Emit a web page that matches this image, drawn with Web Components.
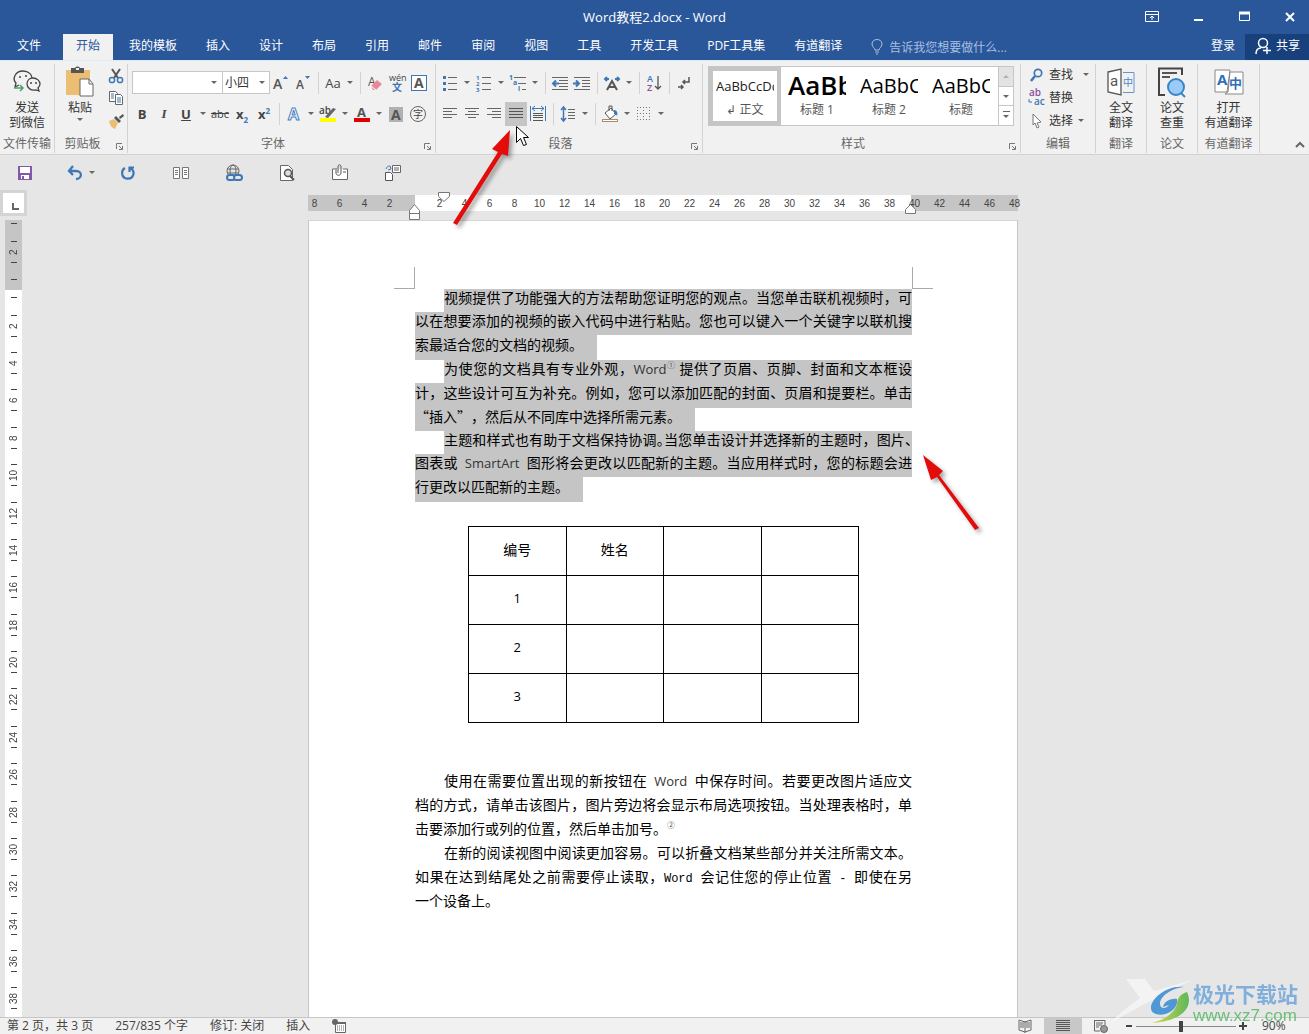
<!DOCTYPE html>
<html lang="zh-CN">
<head>
<meta charset="utf-8">
<title>Word教程2.docx - Word</title>
<style>
  html, body { margin: 0; height: 100%; }
  body { font: 12px/16px "Open Sans", "Noto Sans CJK SC", sans-serif; color: #444; overflow: hidden; }
</style>
</head>
<body>
<word-app></word-app>

<script>
const ARROW = '<path d="M2 3h6l-3 3z" fill="#666"/>';
const ICONS = {
  wechat: [28, 28, '<g fill="none" stroke="#444" stroke-width="1.3"><path d="M6 17l-4 2 1-4C-1 11 2 3 10 3c6 0 9 4 9 7"/><path d="M14 16c0-4 3-6 6-6 4 0 7 3 7 6 0 2-1 3-2 4l1 3-3-1c-5 1-9-2-9-6z"/></g><g fill="#444"><circle cx="7" cy="9" r="1"/><circle cx="13" cy="8" r="1"/><circle cx="18" cy="15" r="1"/><circle cx="23" cy="15" r="1"/></g><path d="M1 20h9m-3-3l3 3-3 3" stroke="#4aa564" stroke-width="1.5" fill="none"/>'],
  paste: [30, 30, '<path d="M1 3h24v25H1z" fill="#ebbe73"/><path d="M6 1h4c1-2 4-2 5 0h4v5H6z" fill="#555"/><rect x="11" y="1" width="3" height="2" fill="#eee"/><path d="M15 12h9l4 5v12H15z" fill="#fff" stroke="#666"/><path d="M24 12v5h4" fill="none" stroke="#666"/>'],
  cut: [16, 16, '<path d="M4 1l6 9M12 1L6 10" stroke="#555" stroke-width="2" fill="none"/><g fill="none" stroke="#3f77b5" stroke-width="1.5"><circle cx="4" cy="12" r="2.6"/><circle cx="12" cy="12" r="2.6"/></g>'],
  copy: [16, 16, '<g fill="#fff" stroke="#666"><path d="M1.500 1.500h6l2 2v8h-8z"/><path d="M7.500 4.500h5l2 2v8h-7z"/></g><path d="M3 4h3M3 6h3M3 8h3M9 8h4M9 10h4M9 12h4" stroke="#3f77b5"/>'],
  brush: [16, 16, '<path d="M1 8l5-2 4 4-3 6c-3-1-5-3-6-8z" fill="#ebbe73"/><path d="M6 5l5 5 2-2-5-5zM11 4l4-3 1 2-4 3z" fill="#555"/>'],
  launcher: [9, 9, '<path d="M1.500 7V1.500H7M4 4l3 3M7.500 4v3.500H4" stroke="#777" fill="none"/>'],
  grow: [16, 16, '<text x="0" y="14" font-size="14" font-weight="600" fill="#555">A</text><path d="M10 4l2.500-3L15 4z" fill="#3f77b5"/>'],
  shrink: [16, 16, '<text x="1" y="14" font-size="12" font-weight="600" fill="#555">A</text><path d="M10 1h5l-2.500 3z" fill="#3f77b5"/>'],
  eraser: [16, 16, '<text x="1" y="11" font-size="12" fill="#555">A</text><path d="M4 11l6-6 5 4-6 6H6z" fill="#e8899a"/><path d="M4 11l5 4" stroke="#fff"/>'],
  pinyin: [18, 18, '<text x="1" y="7" font-size="9" fill="#444">wén</text><text x="4" y="17" font-size="10" font-weight="700" fill="#3f77b5">文</text>'],
  boxA: [18, 18, '<rect x="1.500" y="1.500" width="15" height="15" fill="#fff" stroke="#3f77b5"/><text x="4" y="14" font-size="14" font-weight="700" fill="#555">A</text>'],
  effect: [18, 18, '<text x="3" y="15" font-size="16" font-weight="700" fill="#fff" stroke="#4a7fc0" stroke-width="1">A</text>'],
  highlight: [18, 18, '<text x="0" y="9" font-size="10" font-weight="600" fill="#444">ab</text><path d="M6 12l8-9 3 1-8 9z" fill="#666"/><rect x="1" y="13" width="16" height="4" fill="#ff0"/>'],
  color: [18, 18, '<text x="4" y="12" font-size="13" font-weight="700" fill="#555">A</text><rect x="1" y="13" width="16" height="4" fill="#e00000"/>'],
  shadeA: [18, 18, '<rect x="2" y="2" width="14" height="15" fill="#b1b1b1"/><text x="4" y="15" font-size="14" font-weight="700" fill="#555">A</text>'],
  circled: [18, 18, '<circle cx="9" cy="9" r="7.500" fill="none" stroke="#666"/><text x="4" y="13" font-size="10" fill="#444">字</text>'],
  bullets: [16, 16, '<g fill="#3f77b5"><rect x="1" y="1" width="3" height="3"/><rect x="1" y="7" width="3" height="3"/><rect x="1" y="13" width="3" height="3"/></g><path d="M6 2.500h9M6 8.500h9M6 14.500h9" stroke="#666"/>'],
  numbers: [16, 16, '<g font-size="6" font-weight="700" fill="#3f77b5"><text x="0" y="5">1</text><text x="0" y="11">2</text><text x="0" y="17">3</text></g><path d="M6 2.500h9M6 8.500h9M6 14.500h9" stroke="#666"/>'],
  multi: [18, 16, '<g font-size="7" font-weight="700" fill="#3f77b5"><text x="0" y="5">1</text><text x="4" y="10">a</text><text x="9" y="16">i</text></g><path d="M5 2.500h12M9 8.500h8M13 14.500h4" stroke="#666"/>'],
  outdent: [18, 16, '<path d="M1 2.500h16M8 5.500h9M8 8.500h9M8 11.500h9M1 14.500h16" stroke="#666"/><path d="M8 8.500H2m3-3l-3 3 3 3" stroke="#3f77b5" stroke-width="2" fill="none"/>'],
  indent: [18, 16, '<path d="M1 2.500h16M9 5.500h8M9 8.500h8M9 11.500h8M1 14.500h16" stroke="#666"/><path d="M0 8.500h6m-3-3l3 3-3 3" stroke="#3f77b5" stroke-width="2" fill="none"/>'],
  asian: [18, 16, '<path d="M4 15l5-9 5 9M6 12h6" stroke="#555" stroke-width="2" fill="none"/><path d="M6 4H2m2-2L2 4l2 2M12 4h4m-2-2l2 2-2 2" stroke="#3f77b5" stroke-width="2" fill="none"/>'],
  sort: [16, 18, '<text x="1" y="8" font-size="9" font-weight="600" fill="#3f77b5">A</text><text x="1" y="17" font-size="9" font-weight="600" fill="#8a4fa0">Z</text><path d="M12 2v13m-3-3l3 3 3-3" stroke="#555" fill="none" stroke-width="1.300"/>'],
  marks: [14, 16, '<path d="M12 2v5H6m2-2L6 7l2 2M1 12h5m-2-2l2 2-2 2" stroke="#555" fill="none" stroke-width="1.500"/>'],
  left: [16, 14, '<path d="M1 1.500h14M1 4.500h9M1 7.500h14M1 10.500h9" stroke="#666"/>'],
  center: [16, 14, '<path d="M1 1.500h14M4 4.500h8M1 7.500h14M4 10.500h8" stroke="#666"/>'],
  right: [16, 14, '<path d="M1 1.500h14M6 4.500h9M1 7.500h14M6 10.500h9" stroke="#666"/>'],
  justify: [16, 14, '<path d="M1 1.500h14M1 4.500h14M1 7.500h14M1 10.500h14" stroke="#555"/>'],
  distribute: [18, 18, '<path d="M1.500 1v15M16.500 1v15" stroke="#3f77b5"/><path d="M3 3.500h12M6 1L3 3.500 6 6M12 1l3 2.500L12 6" stroke="#3f77b5" fill="none"/><path d="M4 8.500h10M4 10.500h10M4 12.500h10M4 15.500h10" stroke="#555"/>'],
  spacing: [16, 18, '<path d="M3.500 2v14M1 5l2.500-3L6 5M1 13l2.500 3L6 13" stroke="#3f77b5" fill="none" stroke-width="1.500"/><path d="M8 4.500h7M8 7.500h7M8 10.500h7M8 13.500h7" stroke="#666"/>'],
  bucket: [18, 18, '<path d="M4 8l6-5 5 6-6 5z" fill="#fff" stroke="#555"/><path d="M8 6V1h3v5" fill="none" stroke="#555"/><path d="M13 5c3 0 4 3 3 6-1-2-2-2-3-2z" fill="#3f77b5"/><rect x="1.500" y="14.500" width="15" height="2" fill="#fff" stroke="#a58f6a"/>'],
  borders: [16, 16, '<g fill="none" stroke="#777" stroke-dasharray="1 2"><path d="M1 1.500h13M1 7.500h13M1.500 1v13M7.500 1v13M13.500 1v13"/><path d="M1 13.500h13"/></g>'],
  find: [14, 14, '<circle cx="8" cy="5" r="3.700" fill="none" stroke="#3f77b5" stroke-width="1.700"/><path d="M5 8l-4 5" stroke="#3f77b5" stroke-width="2.500"/>'],
  replace: [18, 18, '<text x="1" y="7" font-size="10" font-weight="600" fill="#8a4fa0">ab</text><text x="6" y="16" font-size="10" font-weight="600" fill="#3f77b5">ac</text><path d="M1 10v3h3" stroke="#3f77b5" fill="none"/>'],
  select: [12, 16, '<path d="M2 1l8 8-4 1 2 4-2 1-2-5-2 2z" fill="#fff" stroke="#777"/>'],
  translate: [30, 30, '<path d="M2 5l13-3v26L2 25z" fill="#fff" stroke="#555" stroke-width="1.300"/><text x="4" y="19" font-size="15" font-family="Roboto" fill="#555">a</text><path d="M17 5.500h11v20H17" fill="none" stroke="#6a94c8"/><text x="17" y="19" font-size="10" fill="#4a86d0">中</text>'],
  check: [30, 30, '<path d="M8 28H2V1.500h23V8" fill="none" stroke="#444" stroke-width="2"/><path d="M5 6h15M5 10h8" stroke="#555" stroke-width="2"/><circle cx="19" cy="20" r="8" fill="#9ccaf6" stroke="#3586c6" stroke-width="2"/><path d="M24 26l4 4" stroke="#3586c6" stroke-width="2"/>'],
  youdao: [32, 30, '<path d="M2 3h15l-3 22H2z" fill="#fff" stroke="#888"/><path d="M17 5h13v22H12l3-2z" fill="#fff" stroke="#888"/><text x="4" y="18" font-size="15" font-weight="700" fill="#2f70b8">A</text><text x="16" y="21" font-size="13" font-weight="700" fill="#2f70b8">中</text>'],
  save: [16, 16, '<path d="M1 1h14v14H1z" fill="#8458a8"/><path d="M3 2h10v6H3zM4 10h8v4H4z" fill="#fff"/><path d="M5 11h2v3H5z" fill="#8458a8"/>'],
  undo: [16, 16, '<path d="M6 1L2 6l4 4M2 6h7c7 0 6 8 0 8" stroke="#3f77b5" stroke-width="2.300" fill="none"/>'],
  redo: [16, 16, '<path d="M5 3C1 5 1 12 6 13.500 14 15 16 6 10 3M14 2.500H9.500V7" stroke="#3f77b5" stroke-width="2.200" fill="none"/>'],
  pages: [18, 14, '<g fill="#fff" stroke="#777"><path d="M1.500 1.500h6v11h-6zM10.500 1.500h6v11h-6z"/></g><path d="M3 4.500h3M3 6.500h3M3 8.500h3M12 4.500h3M12 6.500h3M12 8.500h3" stroke="#777"/>'],
  link: [18, 18, '<g fill="none" stroke="#666"><circle cx="8" cy="7" r="6"/><ellipse cx="8" cy="7" rx="3" ry="6"/><path d="M2 5h12M2 9h12"/></g><g fill="#e6e6e6" stroke="#3f77b5" stroke-width="2"><rect x="2" y="11" width="8" height="5" rx="2.500"/><rect x="9" y="11" width="8" height="5" rx="2.500"/></g>'],
  preview: [16, 18, '<path d="M1.500 1.500h8l4 4v11h-12z" fill="#fff" stroke="#666"/><circle cx="9" cy="9" r="3.500" fill="#ddd" stroke="#555" stroke-width="1.500"/><path d="M11 12l4 4" stroke="#555" stroke-width="2"/>'],
  attach: [18, 18, '<path d="M4 5H1.500v10.500h15V5H12" fill="#fff" stroke="#666"/><path d="M5 4v5c0 3 5 3 5 0V3c0-3-3-3-3 0v6" fill="none" stroke="#555"/><path d="M12 8h3" stroke="#555"/>'],
  mail: [18, 18, '<path d="M1.500 8.500h5l2 2v6h-7z" fill="#fff" stroke="#555"/><path d="M8.500 1.500h8v7h-8zM10 4h5M10 6h5" fill="#fff" stroke="#666"/><path d="M2 5c1-3 3-3 4-3m-2 4l3-1-1-3" stroke="#3f77b5" fill="none"/>'],
  ribbonOpt: [14, 12, '<path d="M.5.5h13v10H.5zM.5 3.500h13M7 9V5M5 7l2-2 2 2" fill="none" stroke="#fff"/>'],
  min: [10, 12, '<path d="M1 9h9" stroke="#fff" stroke-width="2"/>'],
  max: [11, 12, '<path d="M.5 1.500h10v8H.5z" fill="none" stroke="#fff"/><path d="M0 2h11" stroke="#fff" stroke-width="3"/>'],
  close: [10, 12, '<path d="M1 2l8 8M9 2l-8 8" stroke="#fff" stroke-width="2"/>'],
  bulb: [12, 16, '<path d="M4 11c0-2-3-3-3-6 0-6 10-6 10 0 0 3-3 4-3 6zM4 13h4M5 15h2" stroke="#a9bfe0" fill="none"/>'],
  person: [18, 18, '<circle cx="9" cy="6" r="4.500" fill="none" stroke="#fff" stroke-width="1.500"/><path d="M2 17c0-4 2-6 5-6M13 10v7M9 13.500h8" fill="none" stroke="#fff" stroke-width="1.500"/>'],
  up: [10, 6, '<path d="M1 5l4-4 4 4" fill="none" stroke="#666" stroke-width="2"/>'],
  caret: [10, 9, ARROW],
  minus: [8, 8, '<path d="M1 4h6" stroke="#444" stroke-width="2"/>'],
  plus: [8, 8, '<path d="M0 4h8M4 0v8" stroke="#444" stroke-width="2"/>'],
  macro: [14, 14, '<path d="M3.500 3.500h10v10h-10z" fill="#fff" stroke="#666"/><path d="M3 4h11" stroke="#666" stroke-width="2"/><path d="M5 7h7M5 9h7M5 11h7" stroke="#666" stroke-dasharray="1 1"/><circle cx="3" cy="3" r="3" fill="#666"/>'],
  read: [14, 14, '<path d="M7 2v12M7 3L1 1v10l6 2 6-2V1z" fill="none" stroke="#666"/><path d="M2 4h4M2 6h4M2 8h4M8 4h4M8 6h4M8 8h4" stroke="#666"/>'],
  print: [14, 14, '<path d="M0 1.500h14M0 3.500h14M0 5.500h14M0 7.500h14M0 9.500h14M0 11.500h14" stroke="#555"/>'],
  web: [16, 14, '<path d="M1 1.500h11V6M1.500 1v11H7M3 4h7M3 6h6M3 8h3" fill="none" stroke="#666"/><circle cx="11" cy="10" r="3.500" fill="#999" stroke="#666"/>'],
};

/* Base class: renders the static template of each element into an open root. */
class Part extends HTMLElement {
  connectedCallback() {
    if (this.shadowRoot) return;
    const t = document.createElement('template');
    t.innerHTML = `<style>*{box-sizing:border-box}button,input,select{font:inherit;color:inherit}
      button{border:0;background:none;padding:0;margin:0;display:flex;align-items:center;justify-content:center}
      ${this.constructor.css || ''}</style>${this.render()}`;
    this.attachShadow({ mode: 'open' }).append(t.content.cloneNode(true));
  }
  attr(n, d = '') { return this.getAttribute(n) ?? d; }
}
const define = (name, css, render) => customElements.define(name, class extends Part {
  static css = css;
  render() { return render(this); }
});

define('w-icon', ':host{display:inline-flex;flex:none}svg{display:block;overflow:visible}', el => {
  const [w, h, body] = ICONS[el.attr('name')];
  return `<svg width="${w}" height="${h}" viewBox="0 0 ${w} ${h}" aria-hidden="true">${body}</svg>`;
});

define('tool-button', `
  :host{display:flex;flex:none;height:24px}
  .main{width:22px;height:24px}
  :host([on]) .main{background:#c5c5c5}
  .drop{width:12px;height:24px}`, el =>
  `<button class="main" aria-label="${el.attr('label')}">${el.attr('icon') ? `<w-icon name="${el.attr('icon')}"></w-icon>` : '<slot></slot>'}</button>` +
  (el.hasAttribute('drop') ? `<button class="drop" aria-label="${el.attr('label')}选项"><w-icon name="caret"></w-icon></button>` : ''));

define('tool-sep', ':host{display:block;width:8px;height:22px;flex:none}i{display:block;width:1px;height:100%;margin:0 auto;background:#d2d2d2}', () => '<i></i>');

define('ribbon-group', `
  :host{display:flex;flex-direction:column;flex:none;border-right:1px solid #d2d2d2;margin:3px 0 1px}
  :host([grow]){flex:1;min-width:0}
  .body{flex:1;min-height:0}
  footer{display:flex;align-items:center;justify-content:center;height:18px;line-height:18px;color:#666;position:relative;white-space:nowrap}
  footer button{position:absolute;right:2px;bottom:1px;width:11px;height:11px}
  :host([launch="near"]) footer{padding-right:17px}`, el =>
  `<div class="body"><slot></slot></div><footer><span>${el.attr('name')}</span>${el.hasAttribute('launch') ? `<button aria-label="${el.attr('name')}设置"><w-icon name="launcher"></w-icon></button>` : ''}</footer>`);

define('big-button', `
  :host{display:block}
  button{flex-direction:column;width:100%;line-height:15px;color:#333;white-space:nowrap}
  .pic{display:flex;align-items:center;justify-content:center;height:36px}`, el =>
  `<button><span class="pic"><w-icon name="${el.attr('icon')}"></w-icon></span><slot></slot></button>`);

define('window-bar', `
  :host{display:flex;height:34px;align-items:center;background:#2a579a;color:#fff}
  .side{flex:1;display:flex;justify-content:flex-end;gap:8px}
  .side button{width:38px;height:32px}
  h1{margin:0;font-size:13px;font-weight:400;line-height:18px}`, () => `
  <div class="side"></div><h1>Word教程2.docx - Word</h1>
  <div class="side"><button aria-label="功能区显示选项"><w-icon name="ribbonOpt"></w-icon></button><button aria-label="最小化"><w-icon name="min"></w-icon></button><button aria-label="最大化"><w-icon name="max"></w-icon></button><button aria-label="关闭"><w-icon name="close"></w-icon></button></div>`);

define('tab-strip', `
  :host{display:flex;height:26px;background:#2a579a;color:#fff;padding-left:4px}
  nav{display:flex;gap:3px;white-space:nowrap}
  nav button{padding:0 13px 2px}
  nav .file{margin-right:6px}
  nav .on{background:#f1f1f1;color:#2a579a}
  .tell{display:flex;align-items:center;gap:6px;margin-left:16px;flex:1}
  input{border:0;background:none;width:140px;padding:0;height:20px;color:#a9bfe0;outline:0}
  input::placeholder{color:#a9bfe0;opacity:1}
  .login{padding:0 10px 2px}
  .share{width:64px;background:#17407c;gap:4px;padding-bottom:2px}`, () => `
  <nav>${['文件', '开始', '我的模板', '插入', '设计', '布局', '引用', '邮件', '审阅', '视图', '工具', '开发工具', 'PDF工具集', '有道翻译'].map((t, i) => `<button class="${['file', 'on'][i] || ''}">${t}</button>`).join('')}</nav>
  <label class="tell"><w-icon name="bulb"></w-icon><input aria-label="操作说明搜索" placeholder="告诉我您想要做什么..."></label>
  <button class="login">登录</button><button class="share"><w-icon name="person"></w-icon>共享</button>`);

define('style-card', `
  :host{display:block;width:72px;height:58px;flex:none}
  button{width:100%;height:100%;flex-direction:column;justify-content:flex-start;padding:1px 6px;border:1px solid transparent}
  :host([on]) button{border:4px solid #c5c5c5;padding:0 3px}
  .demo{width:100%;height:33px;line-height:33px;overflow:hidden;white-space:nowrap;color:#000;text-align:left}
  :host([on]) .demo{height:31px;line-height:31px;font-size:13px;color:#222}
  .name{line-height:16px;color:#555}`, el =>
  `<button><span class="demo" style="${el.attr('look')}">${el.attr('demo')}</span><span class="name"><slot></slot></span></button>`);

define('style-gallery', `
  :host{display:flex;height:60px;border:1px solid #c6c6c6;background:#fff;margin:2px 6px 0 5px}
  .cards{display:flex;flex:1;min-width:0;overflow:hidden}
  .scroll{width:15px;border-left:1px solid #c6c6c6;display:flex;flex-direction:column}
  .scroll button{flex:1;width:100%;border-bottom:1px solid #c6c6c6}
  .scroll button:first-child{background:#e3e3e3}
  .scroll button:first-child w-icon{transform:rotate(180deg);opacity:.4}
  .scroll button:last-child{border:0}
  .more{width:7px;border-top:1px solid #666;display:flex;justify-content:center}`, () => `
  <div class="cards">
    <style-card on demo="AaBbCcDd">↲ 正文</style-card>
    <style-card demo="AaBb" look="font-size:26px;font-weight:600">标题 1</style-card>
    <style-card demo="AaBbC" look="font-size:20px">标题 2</style-card>
    <style-card demo="AaBbC" look="font-size:20px">标题</style-card>
  </div>
  <div class="scroll"><button aria-label="上一行"><w-icon name="caret"></w-icon></button><button aria-label="下一行"><w-icon name="caret"></w-icon></button><button aria-label="更多样式"><span class="more"><w-icon name="caret"></w-icon></span></button></div>`);

define('word-ribbon', `
  :host{display:flex;height:95px;background:#f1f1f1;border-top:1px solid #d8ecf8;border-bottom:1px solid #d2d2d2}
  .row{display:flex;align-items:center;height:31px;padding-left:3px}
  .row:first-child{margin-top:3px}
  .clip{display:flex}
  .paste{width:52px}
  .mini{display:flex;flex-direction:column}
  .font{width:91px;height:23px;border:1px solid #c6c6c6;background:#fff;display:flex;align-items:center;margin-left:1px}
  .font input{width:76px;border:0;background:none;height:20px;outline:0}
  .size{width:47px;height:23px;border:1px solid #c6c6c6;border-left:0;background:#fff;display:flex;align-items:center}
  .size select{appearance:none;border:0;background:none;padding:0 0 0 2px;width:34px;height:21px;outline:0;color:#333}
  .edit{margin-top:-1px}
  .edit button{gap:3px;height:23px;color:#333;padding-left:7px}
  .edit .ic{width:18px;display:flex;justify-content:center}
  .edit .d{margin-left:5px}
  .end{width:49px;display:flex;align-items:flex-end;justify-content:flex-end;padding:0 4px 4px 0}
  .end button{height:10px}
  b,i,u,s,span.x{font-size:13px;color:#444}
  s{font-size:11px}
  .x{font-weight:700}
  sub,sup{font-size:8px;color:#3f77b5;line-height:0}`, () => `
  <ribbon-group style="width:55px" name="文件传输"><big-button icon="wechat"><span>发送</span><span>到微信</span></big-button></ribbon-group>
  <ribbon-group style="width:73px" name="剪贴板" launch="near"><div class="clip">
    <div class="paste"><big-button icon="paste"><span>粘贴</span><w-icon name="caret"></w-icon></big-button></div>
    <div class="mini"><tool-button icon="cut" label="剪切" style="height:22px"></tool-button><tool-button icon="copy" label="复制" style="height:23px"></tool-button><tool-button icon="brush" label="格式刷" style="height:22px"></tool-button></div></div></ribbon-group>
  <ribbon-group style="width:308px" name="字体" launch="near">
    <div class="row"><label class="font"><input aria-label="字体"><w-icon name="caret"></w-icon></label>
      <label class="size"><select aria-label="字号"><option>小四</option></select><w-icon name="caret"></w-icon></label>
      <tool-button icon="grow" label="增大字号"></tool-button><tool-button icon="shrink" label="减小字号"></tool-button><tool-sep></tool-sep>
      <tool-button label="更改大小写" drop><span style="font-size:13px">Aa</span></tool-button><tool-sep></tool-sep>
      <tool-button icon="eraser" label="清除格式"></tool-button><tool-button icon="pinyin" label="拼音指南"></tool-button><tool-button icon="boxA" label="字符边框"></tool-button></div>
    <div class="row"><tool-button label="加粗"><b>B</b></tool-button><tool-button label="倾斜"><i style="font-family:'Liberation Serif',serif;font-weight:700">I</i></tool-button><tool-button label="下划线" drop><u style="font-weight:700">U</u></tool-button>
      <tool-button label="删除线"><s>abc</s></tool-button><tool-button label="下标"><span class="x">x<sub>2</sub></span></tool-button><tool-button label="上标"><span class="x">x<sup>2</sup></span></tool-button><tool-sep></tool-sep>
      <tool-button icon="effect" label="文本效果" drop></tool-button><tool-button icon="highlight" label="突出显示" drop></tool-button><tool-button icon="color" label="字体颜色" drop></tool-button><tool-button icon="shadeA" label="字符底纹"></tool-button><tool-button icon="circled" label="带圈字符"></tool-button></div>
  </ribbon-group>
  <ribbon-group style="width:267px" name="段落" launch="near">
    <div class="row"><tool-button icon="bullets" label="项目符号" drop></tool-button><tool-button icon="numbers" label="编号" drop></tool-button><tool-button icon="multi" label="多级列表" drop></tool-button><tool-sep></tool-sep>
      <tool-button icon="outdent" label="减少缩进"></tool-button><tool-button icon="indent" label="增加缩进"></tool-button><tool-sep></tool-sep><tool-button icon="asian" label="中文版式" drop></tool-button><tool-sep></tool-sep><tool-button icon="sort" label="排序"></tool-button><tool-sep></tool-sep><tool-button icon="marks" label="编辑标记"></tool-button></div>
    <div class="row"><tool-button icon="left" label="左对齐"></tool-button><tool-button icon="center" label="居中"></tool-button><tool-button icon="right" label="右对齐"></tool-button><tool-button icon="justify" label="两端对齐" on></tool-button><tool-button icon="distribute" label="分散对齐"></tool-button><tool-sep></tool-sep>
      <tool-button icon="spacing" label="行距" drop></tool-button><tool-sep></tool-sep><tool-button icon="bucket" label="底纹" drop></tool-button><tool-button icon="borders" label="边框" drop></tool-button></div>
  </ribbon-group>
  <ribbon-group grow name="样式" launch="near"><style-gallery></style-gallery></ribbon-group>
  <ribbon-group style="width:75px" name="编辑"><div class="edit">
    <button><span class="ic"><w-icon name="find"></w-icon></span>查找<w-icon class="d" name="caret"></w-icon></button>
    <button><span class="ic"><w-icon name="replace"></w-icon></span>替换</button>
    <button><span class="ic"><w-icon name="select"></w-icon></span>选择<w-icon name="caret"></w-icon></button></div></ribbon-group>
  <ribbon-group style="width:51px" name="翻译"><big-button icon="translate"><span>全文</span><span>翻译</span></big-button></ribbon-group>
  <ribbon-group style="width:51px" name="论文"><big-button icon="check"><span>论文</span><span>查重</span></big-button></ribbon-group>
  <ribbon-group style="width:62px" name="有道翻译"><big-button icon="youdao"><span>打开</span><span>有道翻译</span></big-button></ribbon-group>
  <div class="end"><button aria-label="折叠功能区"><w-icon name="up"></w-icon></button></div>`);

define('quick-access', `
  :host{display:flex;align-items:center;height:35px;padding-left:14px;gap:31px}
  .u{margin:0 -12px 0 -3px}`, () => `
  <tool-button icon="save" label="保存"></tool-button><tool-button class="u" icon="undo" label="撤消" drop></tool-button><tool-button icon="redo" label="重复"></tool-button><tool-button icon="pages" label="多页"></tool-button><tool-button icon="link" label="超链接"></tool-button><tool-button icon="preview" label="打印预览"></tool-button><tool-button icon="attach" label="附件"></tool-button><tool-button icon="mail" label="邮件合并"></tool-button>`);

define('ruler-h', `
  :host{display:block;position:relative;height:16px;margin:5px 0 9px;background:linear-gradient(90deg,#c5c5c5 107px,#fff 107px,#fff 603px,#c5c5c5 603px);font:10px/17px "Liberation Sans",sans-serif;color:#444}
  .n{display:flex;margin:0 -9px 0 -6px}
  .n span{width:25px;text-align:center;flex:none}
  svg{position:absolute;overflow:visible}
  path{fill:#fff;stroke:#777}`, () => {
  let s = '';
  for (let v = -8; v <= 48; v += 2) s += `<span>${v === 0 ? '&nbsp;' : Math.abs(v)}</span>`;
  return `<div class="n">${s}</div>
  <svg width="12" height="16" style="left:101px;top:9px"><path d="M.5 15.500v-9l5-6 5 6v9zM.5 9.500h10"/></svg>
  <svg width="12" height="11" style="left:130px;top:-3px"><path d="M.5.5h11v4l-5.500 5-5.500-5z"/></svg>
  <svg width="12" height="11" style="left:597px;top:8px"><path d="M.5 10.500v-4l5-5 5 5v4z"/></svg>`;
});

define('ruler-v', `
  :host{display:flex;flex-direction:column;width:17px;background:#fff;font:10px/12px "Liberation Sans",sans-serif;color:#444;min-height:0}
  .top{height:70px;background:#c5c5c5;display:flex;flex-direction:column;justify-content:space-between;align-items:center;padding:3px 0 10px}
  .cells{flex:1;display:flex;flex-direction:column;align-items:center;margin-top:17px;min-height:0;position:relative}
  .c{flex:1;min-height:0;display:flex;flex-direction:column;align-items:center;justify-content:center;gap:2px}
  .c span{writing-mode:vertical-rl;transform:rotate(180deg);height:16px;text-align:center}
  i{display:block;width:6px;height:1px;background:#444;flex:none}
  .cells>i{position:absolute;top:-10px}`, () => {
  const cell = n => `<div class="c"><i></i><span>${n}</span><i></i></div>`;
  let s = '<i></i>';
  for (let n = 2; n <= 38; n += 2) s += cell(n);
  return `<div class="top"><i></i>${cell(2)}<i></i></div><div class="cells">${s}</div>`;
});

define('doc-line', `
  :host{display:block;height:23px;line-height:17px;white-space:nowrap;text-align:justify;text-align-last:justify}
  :host([tall]){height:25px;line-height:18px}
  :host([indent]){margin-left:29px}
  :host([sel]){background:#c5c5c5}
  :host([full]){text-spacing-trim:space-all}
  :host([end]){width:fit-content;text-align-last:left;padding-right:14px}`, () => '<slot></slot>');

define('doc-table', `
  :host{display:block;margin:24px 53px 0}
  table{border-collapse:collapse;width:100%;table-layout:fixed}
  td,th{border:1px solid #000;height:49px;padding:0 0 4px;text-align:center;font-weight:400}
  td{font-family:"Open Sans",sans-serif;font-size:13px}`, () => `
  <table><thead><tr><th>编号</th><th>姓名</th><th></th><th></th></tr></thead>
  <tbody>${[1, 2, 3].map(n => `<tr><td>${n}</td><td></td><td></td><td></td></tr>`).join('')}</tbody></table>`);

define('doc-page', `
  :host{display:block;flex:1;min-height:0;background:#fff;border-left:1px solid #c6c6c6;border-right:1px solid #c6c6c6;border-top:1px solid #d4d4d4;color:#000;padding:46px 105px 0 106px;font:14px/19px "Noto Sans CJK SC",sans-serif}
  .crop{display:flex;justify-content:space-between;margin:0 -21px}
  .crop i{width:21px;height:22px;border-bottom:1px solid #aaa;border-right:1px solid #aaa}
  .crop i+i{border-right:0;border-left:1px solid #aaa}
  .l{font-family:"Open Sans",sans-serif;font-size:13px;color:#333}
  .m{font-family:"Liberation Mono",monospace;font-size:12px}
  .h{font-feature-settings:"halt"}
  sup{font-size:8px;line-height:0;color:#555}
  .after{margin-top:48px}`, () => `
  <div class="crop"><i></i><i></i></div>
  <div>
    <doc-line sel indent>视频提供了功能强大的方法帮助您证明您的观点。当您单击联机视频时，可</doc-line>
    <doc-line sel>以在想要添加的视频的嵌入代码中进行粘贴。您也可以键入一个关键字以联机搜</doc-line>
    <doc-line sel end tall>索最适合您的文档的视频。</doc-line>
    <doc-line sel indent>为使您的文档具有专业外观，<span class="l">Word</span><sup>①</sup> 提供了页眉、页脚、封面和文本框设</doc-line>
    <doc-line sel tall>计，这些设计可互为补充。例如，您可以添加匹配的封面、页眉和提要栏。单击</doc-line>
    <doc-line sel end full>“插入”，然后从不同库中选择所需元素。</doc-line>
    <doc-line sel indent>主题和样式也有助于文档保持协调<span class="h">。</span>当您单击设计并选择新的主题时，图片<span class="h">、</span></doc-line>
    <doc-line sel>图表或&ensp;<span class="l">SmartArt</span>&ensp;图形将会更改以匹配新的主题。当应用样式时，您的标题会进</doc-line>
    <doc-line sel end tall>行更改以匹配新的主题。</doc-line>
  </div>
  <doc-table></doc-table>
  <div class="after">
    <doc-line indent tall>使用在需要位置出现的新按钮在&ensp;<span class="l">Word</span>&ensp;中保存时间。若要更改图片适应文</doc-line>
    <doc-line>档的方式，请单击该图片，图片旁边将会显示布局选项按钮。当处理表格时，单</doc-line>
    <doc-line end tall>击要添加行或列的位置，然后单击加号。<sup>②</sup></doc-line>
    <doc-line indent>在新的阅读视图中阅读更加容易。可以折叠文档某些部分并关注所需文本。</doc-line>
    <doc-line tall>如果在达到结尾处之前需要停止读取，<span class="m">Word</span>&ensp;会记住您的停止位置&ensp;<span class="m">-</span>&ensp;即使在另</doc-line>
    <doc-line end>一个设备上。</doc-line>
  </div>`);

define('work-area', `
  :host{display:flex;flex:1;min-height:0;overflow:hidden;padding-right:9px}
  .left{width:26px;display:flex;flex-direction:column;align-items:flex-start;flex:none}
  .left button{width:27px;height:26px;margin:0 0 4px;border:3px solid #d4d4d4;background:#fff;flex:none;padding:6px 0 0 4px}
  .left button i{width:7px;height:7px;border:solid #666;border-width:0 0 2px 2px}
  ruler-v{flex:1;margin-left:5px}
  .canvas{flex:1;display:flex;justify-content:center;min-width:0}
  .sheet{width:710px;display:flex;flex-direction:column;flex:none}`, () => `
  <div class="left"><button aria-label="制表符"><i></i></button><ruler-v></ruler-v></div>
  <div class="canvas"><div class="sheet"><ruler-h></ruler-h><doc-page></doc-page></div></div>`);

define('status-bar', `
  :host{display:flex;height:17px;background:#f1f1f1;border-top:1px solid #c6c6c6;padding-left:7px;line-height:16px;align-items:center;white-space:nowrap}
  .info{display:flex;gap:22px;flex:1;align-items:center}
  .view{width:38px;height:16px}
  .on{background:#c8c8c8}
  .step{width:14px;height:16px}
  input{appearance:none;width:100px;height:14px;margin:0;background:linear-gradient(#888,#888) center/100% 1px no-repeat}
  input::-webkit-slider-thumb{appearance:none;width:4px;height:11px;background:#444}
  output{width:59px;padding-left:12px}
  .z{display:flex;align-items:center;margin-left:2px}`, () => `
  <div class="info"><span>第 2 页，共 3 页</span><span>257/835 个字</span><span>修订: 关闭</span><span>插入</span><w-icon name="macro"></w-icon></div>
  <button class="view" aria-label="阅读视图"><w-icon name="read"></w-icon></button><button class="view on" aria-label="页面视图"><w-icon name="print"></w-icon></button><button class="view" aria-label="Web版式"><w-icon name="web"></w-icon></button>
  <div class="z"><button class="step" aria-label="缩小"><w-icon name="minus"></w-icon></button><input type="range" aria-label="缩放" min="10" max="190" value="90"><button class="step" aria-label="放大"><w-icon name="plus"></w-icon></button></div><output>90%</output>`);

define('site-mark', `
  :host{position:absolute;right:11px;bottom:7px;display:flex;align-items:center;gap:1px;pointer-events:none}
  .t{display:flex;flex-direction:column;font-weight:700;opacity:.85}
  .cn{font-size:21px;line-height:26px;color:#6fa6da}
  .en{font:17px/18px "Liberation Sans",sans-serif;color:#55b865}`, () => `
  <svg width="84" height="48" viewBox="0 0 84 48">
    <defs><linearGradient id="leaf"><stop offset="0" stop-color="#d9d84a"/><stop offset="1" stop-color="#5fb75c"/></linearGradient></defs>
    <path d="M18 0h19l9 12L84 1C52 16 28 30 2 44 14 32 24 25 32 19z" fill="#fff" opacity=".5"/>
    <path d="M76 8C58 6 43 20 43 29c0 8 13 8 19 4 5-3 8-8 7-13-7-1-13 3-14 8l6-2c-3 4-9 4-9-1C52 17 64 9 76 8z" fill="#4f97d6"/>
    <path d="M79 13c7 15-5 29-35 31 15-4 24-12 25-20 1-6 4-9 10-11z" fill="url(#leaf)"/></svg>
  <div class="t"><span class="cn">极光下载站</span><span class="en">www.xz7.com</span></div>`);

define('pointer-notes', ':host{position:absolute;left:0;top:0;pointer-events:none}svg{display:block}.a{filter:drop-shadow(3px 3px 2px rgba(0,0,0,.35))}', () => `
  <svg width="1000" height="560" aria-hidden="true"><g class="a" fill="#e40b0b"><path d="M453 223L498 152l-6-3 18-19-2 26-6-2-45 71z"/><path d="M975 530L937 477l-6 3-8-25 20 16-4 4 40 53z"/></g>
  <path d="M516.500 126.500v16l4-4 3 7 3-1-3-7h5z" fill="#fff" stroke="#000"/></svg>`);

define('word-app', `
  :host{display:flex;flex-direction:column;height:100vh;background:#e6e6e6;position:relative;overflow:hidden}`, () => `
  <window-bar></window-bar><tab-strip></tab-strip><word-ribbon></word-ribbon><quick-access></quick-access>
  <work-area></work-area><status-bar></status-bar><site-mark></site-mark><pointer-notes></pointer-notes>`);
</script>
</body>
</html>
